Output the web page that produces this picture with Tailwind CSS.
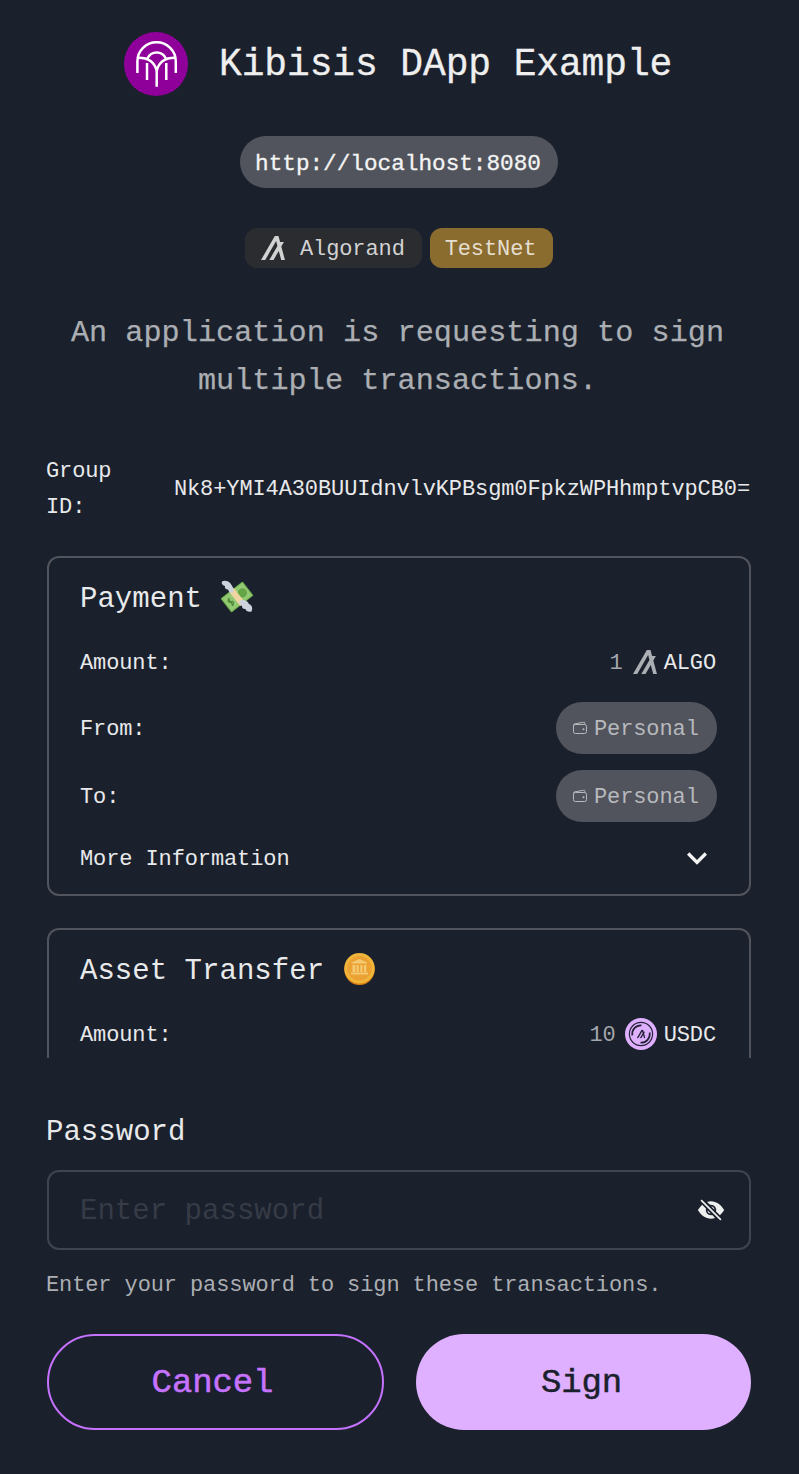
<!DOCTYPE html>
<html lang="en">
<head>
<meta charset="utf-8">
<title>Sign transactions</title>
<script src="https://cdn.jsdelivr.net/npm/@tailwindcss/browser@4"></script>
</head>
<body class="bg-[#1a202c]">
<svg class="hidden">
  <symbol id="algo" viewBox="0 0 445 445"><path fill="currentColor" d="M444.4 444.3H374.7L329.5 276.2 232.3 444.3H154.6L304.8 184 280.6 93.7 78.1 444.4H.3L256.4.8H324.5L354.3 111.3H424.7L376.6 194.8Z"/></symbol>
  <symbol id="wallet" viewBox="0 0 16 16"><g fill="none" stroke="currentColor" stroke-linejoin="round"><rect x="1.500" y="4.500" width="13" height="9" rx="1.800"/><path d="M12.800 4.400V3.300a1 1 0 0 0-1.300-1L2.900 3.800A1.700 1.700 0 0 0 1.500 5.500v1"/></g><circle cx="11.500" cy="9.200" r="1" fill="currentColor"/></symbol>
</svg>
<main class="w-[799px] h-[1474px] pt-8 pl-[47px] pr-12 flex flex-col text-[#e8e9ea] overflow-hidden font-['Liberation_Mono',monospace] text-[22px] tracking-[-0.11px] leading-9 whitespace-nowrap [&_span]:pt-[3px]">
  <header class="flex items-center gap-[31px] pl-[77px] h-16">
    <svg class="size-16 shrink-0" viewBox="0 0 64 64"><circle cx="32" cy="32" r="32" fill="#8f009b"/><g fill="none" stroke="#fff" stroke-width="2.500"><path d="M13.400 41V29.500a19.200 19.200 0 0 1 38.400 0V41"/><path d="M13.500 25.800c10-.3 17 4 19.200 13 2.200-9 9-13.300 19-13M32.700 54.800V37M23 48V31M42.300 48V31M23.500 26.500c3.500-8 14.800-8 18.300 0"/></g></svg>
    <h1 class="pt-px text-[38px] tracking-[-0.14px] leading-[60px] text-[#efefef] [-webkit-text-stroke:0.3px]">Kibisis DApp Example</h1>
  </header>
  <div class="mt-10 self-center w-[318px] h-[52px] rounded-full bg-[#51545c] flex items-center justify-center text-[#f4f4f4] text-[22.7px] tracking-[0px] [-webkit-text-stroke:0.3px]"><span class="-ml-0.5">http://localhost:8080</span></div>
  <div class="mt-10 flex justify-center gap-2 text-[#d2d2d2]">
    <div class="w-[177px] h-10 rounded-xl bg-[#2a2c30] flex items-center pl-4 gap-[15px]"><svg class="size-6"><use href="#algo"/></svg><span>Algorand</span></div>
    <div class="w-[123px] h-10 rounded-xl bg-[#8b6c2f] flex items-center justify-center text-[#e5ded0]"><span class="-ml-0.5">TestNet</span></div>
  </div>
  <p class="mt-[41px] pr-[3px] text-center text-[30.2px] tracking-[0.03px] leading-[48px] text-[#abaeb2] [-webkit-text-stroke:0.25px]">An application is requesting to sign<br>multiple transactions.</p>
  <div class="mt-[49px] h-[72px] flex items-center justify-between -ml-px"><div>Group<br>ID:</div><div class="pr-px">Nk8+YMI4A30BUUIdnvlvKPBsgm0FpkzWPHhmptvpCB0=</div></div>

  <div class="mt-[30px] h-[502px] shrink-0 overflow-hidden flex flex-col gap-8">
    <section class="h-[340px] shrink-0 rounded-xl border-2 border-[#51545c] py-4 pl-[31px] pr-8 flex flex-col gap-4">
      <div class="h-12 flex items-center text-[29px] tracking-[0.03px] gap-[18px]"><span>Payment</span>
        <svg class="w-[34px] h-[33px] -mt-1" viewBox="0 0 34 33"><g transform="rotate(-38 17 17)"><rect x="3" y="8" width="28" height="18" rx="1" fill="#68a84b"/><rect x="4" y="9" width="26" height="16" fill="#94c973"/><circle cx="23.800" cy="17" r="4.600" fill="#63a547"/><rect x="14" y="8" width="6" height="18" fill="#efd5a1"/><path d="M10.500 14c-3-.8-4.500 2.600-1.300 3.100s2 3.800-1.500 3.200M8.900 12.500v9" fill="none" stroke="#4b8a37" stroke-width="1.300"/></g><path d="M2 1.500C5-.2 10 1.500 11.500 5c2 2.500 2.700 5.500 1 8-2.500-.2-4-1.500-4.500-3.500C5.500 9.500 4.500 8 5 6 2.500 5.500 1 3.500 2 1.500ZM19.500 20.500c4-1.500 8 .2 9.500 3.500 3 1 4 4 2.500 7.500-3 .8-5.500-.2-6-2.500-2.500.2-3.500-1.200-3.500-3-2-.8-3-3-2.500-5.500Z" fill="#ccd3dd"/></svg>
      </div>
      <div class="h-12 flex items-center pr-px"><span>Amount:</span><span class="ml-auto text-[#a3a6ab]">1</span><svg class="size-6 ml-[10px] mr-[7px] text-[#abaeb2]"><use href="#algo"/></svg><span>ALGO</span></div>
      <div class="h-[52px] flex items-center justify-between"><span>From:</span><div class="w-[161px] h-[52px] rounded-full bg-[#51545c] text-[#b7b9bd] flex items-center pl-4 gap-[6px]"><svg class="size-4"><use href="#wallet"/></svg><span>Personal</span></div></div>
      <div class="h-[52px] flex items-center justify-between"><span>To:</span><div class="w-[161px] h-[52px] rounded-full bg-[#51545c] text-[#b7b9bd] flex items-center pl-4 gap-[6px]"><svg class="size-4"><use href="#wallet"/></svg><span>Personal</span></div></div>
      <div class="h-10 flex items-center justify-between"><span>More Information</span><svg class="size-10" viewBox="0 0 24 24"><path fill="#f4f4f4" d="M16.590 8.590 12 13.170 7.410 8.590 6 10l6 6 6-6z"/></svg></div>
    </section>
    <section class="h-[340px] shrink-0 rounded-xl border-2 border-[#51545c] py-4 pl-[31px] pr-8 flex flex-col gap-4">
      <div class="h-12 flex items-center text-[29px] tracking-[0.03px] gap-5"><span>Asset Transfer</span>
        <svg class="w-[31px] h-8 -mt-[3px]" viewBox="0 0 31 32"><ellipse cx="15.500" cy="16.500" rx="15.200" ry="15.500" fill="#dc8213"/><ellipse cx="15.500" cy="15.300" rx="15.200" ry="15.200" fill="#f0b63b"/><circle cx="15.500" cy="15.300" r="12.300" fill="#eca133"/><path d="M7.500 10.500v-1L15.500 6l7.500 3.500v1ZM8.500 12h2.800v7H8.500Zm4 0h2.200v7h-2.200Zm3.800 0h2.200v7h-2.200Zm3.700 0h2.300v7H20ZM7 19.500h17V21.500H7Z" fill="#f4ca72"/></svg>
      </div>
      <div class="h-12 flex items-center pr-px"><span>Amount:</span><span class="ml-auto text-[#a3a6ab]">10</span>
        <svg class="size-8 ml-[9px] mr-[7px]" viewBox="0 0 32 32"><circle cx="16" cy="16" r="16" fill="#dfb0ff"/><g fill="none" stroke="#242236"><circle cx="16" cy="16" r="11.600" stroke-width="1.200"/><path d="M7.300 17.500a8.800 8.800 0 0 1 9.200-10.200M24.700 14.500a8.800 8.800 0 0 1-9.200 10.200" stroke-width="1.700"/></g><svg x="11.500" y="11.500" width="9" height="9" class="text-[#242236]"><use href="#algo" width="9" height="9"/></svg></svg><span>USDC</span></div>
    </section>
  </div>

  <label class="mt-[51px] mb-[13px] -ml-px text-[29px] tracking-[0.03px] leading-[48px]">Password</label>
  <div class="h-20 shrink-0 rounded-xl border-2 border-[#40444e] pl-[31px] pr-6 flex items-center justify-between text-[29px] tracking-[0.03px] text-[#363b46]"><span>Enter password</span>
    <svg class="size-7" viewBox="0 0 512 512" fill="#eeefef"><path d="m64 86 22-22 362 362-22 22ZM259.300 192.100l60.600 60.600a64 64 0 0 0-60.600-60.600ZM252.700 319.900l-60.600-60.600a64 64 0 0 0 60.600 60.600Z"/><path d="M256 352a96 96 0 0 1-92.600-121.300L94.300 161.600C66 187.400 39 221 16 256c26.400 44 62.600 89.900 100.900 115.900C159.800 402 205.800 416 255.800 416a233 233 0 0 0 75.600-12.700l-53-54A96 96 0 0 1 256 352ZM256 160a96 96 0 0 1 92.600 121.300L419.300 352c29-26.300 56-61.600 76.700-96-26.300-42.400-62.600-88.600-100.600-116C351 112 305 96 255.800 96a226 226 0 0 0-71.900 11.800l54 54A96 96 0 0 1 256 160Z"/></svg>
  </div>
  <p class="mt-[18px] -ml-px text-[#abaeb2]">Enter your password to sign these transactions.</p>
  <div class="mt-[30px] flex shrink-0 gap-8 text-[34px] tracking-[-0.1px] [-webkit-text-stroke:0.5px]">
    <button class="w-[337px] shrink-0 h-24 rounded-full border-2 border-[#c572ff] text-[#c572ff] pr-1.5 pt-0.5">Cancel</button>
    <button class="w-[335px] shrink-0 h-24 rounded-full bg-[#dfb0ff] text-[#1a202c] pr-1 pt-0.5">Sign</button>
  </div>
</main>
</body>
</html>
